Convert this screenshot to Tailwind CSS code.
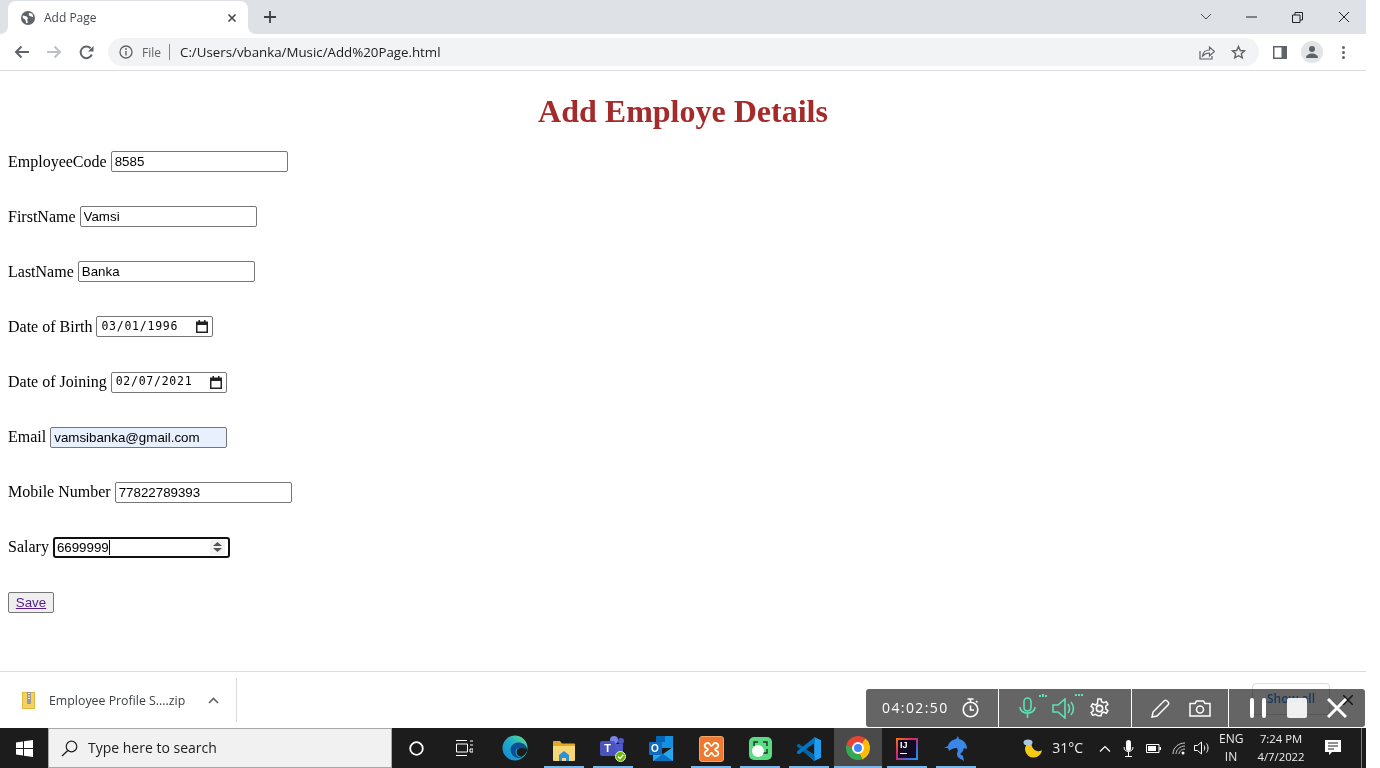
<!DOCTYPE html>
<html lang="en">
<head>
    <meta charset="UTF-8">
    <title>Add Page</title>
    <script src="https://cdn.jsdelivr.net/npm/@tailwindcss/browser@4"></script>
</head>
<body class="bg-white overflow-hidden font-['Liberation_Sans',sans-serif]">
<div class="relative w-[1380px] h-[768px] overflow-hidden bg-white">
  <div class="flex flex-col w-[1366px] h-[768px]">

    <!-- tab strip -->
    <div class="h-[34px] bg-[#dee1e6] flex items-end pl-2 shrink-0">
      <div class="relative w-[240px] h-[33px] bg-white rounded-t-lg flex items-center pl-[13px] pr-[11px] text-[#45494e]">
        <svg class="absolute left-[-8px] bottom-0" width="8" height="8" viewBox="0 0 8 8"><path d="M8 0v8H0c4 0 8-3 8-8z" fill="#fff"/></svg>
        <svg class="absolute right-[-8px] bottom-0" width="8" height="8" viewBox="0 0 8 8"><path d="M0 0v8h8C4 8 0 5 0 0z" fill="#fff"/></svg>
        <svg width="14" height="14" viewBox="0 0 16 16"><circle cx="8" cy="8" r="8" fill="#5f6368"/><path d="M2 5l4 1 2 2-1 2 1 3-2 1-1-4-3-2zM9 2l4 1 1 4-3-1-2-1z" fill="#fff"/></svg>
        <span class="ml-[9px] text-xs font-['Open_Sans',sans-serif]">Add Page</span>
        <svg class="ml-auto" width="10" height="10" viewBox="0 0 10 10"><path d="M1.500 1.500l7 7M8.500 1.500l-7 7" stroke="#44474b" stroke-width="1.600"/></svg>
      </div>
      <svg class="ml-[15px] mb-[10px]" width="14" height="14" viewBox="0 0 14 14"><path d="M7 1v12M1 7h12" stroke="#3c4043" stroke-width="1.800"/></svg>
      <div class="ml-auto flex items-center h-[34px] mr-[16px] text-[#3c4043]">
        <svg width="12" height="8" viewBox="0 0 12 8"><path d="M1 1l5 5 5-5" fill="none" stroke="#44474b"/></svg>
        <svg class="ml-[34px]" width="11" height="2" viewBox="0 0 11 2"><path d="M0 1h11" stroke="#222" stroke-width="1"/></svg>
        <svg class="ml-[35px]" width="11" height="11" viewBox="0 0 11 11"><path d="M.5 3h7.500v7.500H.5zM3 3V.5h7.500V8H8" fill="none" stroke="#222"/></svg>
        <svg class="ml-[35px]" width="12" height="12" viewBox="0 0 12 12"><path d="M1 1l10 10M11 1L1 11" stroke="#222"/></svg>
      </div>
    </div>

    <!-- toolbar -->
    <div class="h-[37px] bg-white border-b border-[#dadce0] flex items-center shrink-0 pl-[14px]">
      <svg width="16" height="14" viewBox="0 0 16 14"><path d="M15 7H2M7.500 1.500L2 7l5.500 5.500" fill="none" stroke="#5f6368" stroke-width="2"/></svg>
      <svg class="ml-[16px]" width="16" height="14" viewBox="0 0 16 14"><path d="M1 7h13M8.500 1.500L14 7l-5.500 5.500" fill="none" stroke="#bdc1c6" stroke-width="2"/></svg>
      <svg class="ml-[17px]" width="15" height="15" viewBox="0 0 15 15"><path d="M12.800 9.500A5.800 5.800 0 1 1 11.600 3.300" fill="none" stroke="#5f6368" stroke-width="2"/><path d="M14.500 1v5.500H9z" fill="#5f6368"/></svg>
      <div class="ml-[14px] w-[1151px] h-[28px] bg-[#f1f3f4] rounded-full flex items-center pl-[11px] pr-[12px]">
        <svg width="14" height="14" viewBox="0 0 14 14"><circle cx="7" cy="7" r="6" fill="none" stroke="#5f6368" stroke-width="1.300"/><path d="M7 6v4.500" stroke="#5f6368" stroke-width="1.400"/><circle cx="7" cy="4" r=".9" fill="#5f6368"/></svg>
        <span class="ml-[9px] mt-px text-[#5f6368] font-['Open_Sans',sans-serif] text-xs">File</span>
        <span class="ml-[8px] w-px h-[16px] bg-[#80868b]"></span>
        <span class="ml-[10px] mt-px text-[#202124] font-['Open_Sans',sans-serif] text-[13.3px]">C:/Users/vbanka/Music/Add%20Page.html</span>
        <svg class="ml-auto" width="16" height="15" viewBox="0 0 16 15"><path d="M1 6v8h12v-3" fill="none" stroke="#5f6368" stroke-width="1.200"/><path d="M3.500 11c.5-4 3-6 7-6V2l5 4.500-5 4.500V8c-3 0-5 .8-7 3z" fill="none" stroke="#5f6368" stroke-width="1.200"/></svg>
        <svg class="ml-[16px] mr-px" width="15" height="15" viewBox="0 0 15 15"><path d="M7.500 1.500l1.800 4 4.200.4-3.200 2.800 1 4.200-3.800-2.200-3.800 2.200 1-4.200L1.500 5.900l4.200-.4z" fill="none" stroke="#5f6368" stroke-width="1.400"/></svg>
      </div>
      <svg class="ml-[14px]" width="14" height="13" viewBox="0 0 14 13"><path d="M0 0h14v13H0z" fill="#5f6368"/><path d="M1.500 1.500h7v10h-7z" fill="#fff"/></svg>
      <div class="ml-[14px] w-[22px] h-[22px] rounded-full bg-[#e2e4e8] flex items-center justify-center">
        <svg width="12" height="12" viewBox="0 0 12 12"><circle cx="6" cy="3" r="3" fill="#5f6368"/><path d="M0 12c0-3 3-4.500 6-4.500s6 1.500 6 4.500z" fill="#5f6368"/></svg>
      </div>
      <div class="ml-[19px] flex flex-col gap-[2px]">
        <span class="w-[3px] h-[3px] rounded-full bg-[#5f6368]"></span>
        <span class="w-[3px] h-[3px] rounded-full bg-[#5f6368]"></span>
        <span class="w-[3px] h-[3px] rounded-full bg-[#5f6368]"></span>
      </div>
    </div>

    <!-- page -->
    <div class="flex-1 min-h-0 font-['Liberation_Serif',serif] text-base text-black">
      <h1 class="text-[32px] leading-[37px] font-bold text-[#a52a2a] text-center mt-[22px]">Add Employe Details</h1>
      <form class="mt-[21px] pl-2 flex flex-col gap-[34.15px]">
        <div class="flex items-center gap-1 h-[21px]">
          <label>EmployeeCode</label>
          <input type="text" value="8585" class="w-[177px] h-[21px] border border-[#767676] rounded-[2px] px-[3px] text-[13.33px] font-['Liberation_Sans',sans-serif]">
        </div>
        <div class="flex items-center gap-1 h-[21px]">
          <label>FirstName</label>
          <input type="text" value="Vamsi" class="w-[177px] h-[21px] border border-[#767676] rounded-[2px] px-[3px] text-[13.33px] font-['Liberation_Sans',sans-serif]">
        </div>
        <div class="flex items-center gap-1 h-[21px]">
          <label>LastName</label>
          <input type="text" value="Banka" class="w-[177px] h-[21px] border border-[#767676] rounded-[2px] px-[3px] text-[13.33px] font-['Liberation_Sans',sans-serif]">
        </div>
        <div class="flex items-center gap-1 h-[21px]">
          <label>Date of Birth</label>
          <div class="w-[117px] h-[21px] border border-[#767676] rounded-[2px] pl-[4px] pr-[4px] flex items-center justify-between text-[11.5px] font-['DejaVu_Sans_Mono',monospace]">
            <span class="tracking-[.75px]">03/01/1996</span>
            <svg width="12" height="13" viewBox="0 0 12 13"><path d="M0 1.500h12V13H0z" fill="#222"/><path d="M1.500 5h9v6.500h-9z" fill="#fff"/><path d="M2.500 0h1.500v2H2.500zM8 0h1.500v2H8z" fill="#222"/></svg>
          </div>
        </div>
        <div class="flex items-center gap-1 h-[21px]">
          <label>Date of Joining</label>
          <div class="w-[116px] h-[21px] border border-[#767676] rounded-[2px] pl-[4px] pr-[4px] flex items-center justify-between text-[11.5px] font-['DejaVu_Sans_Mono',monospace]">
            <span class="tracking-[.75px]">02/07/2021</span>
            <svg width="12" height="13" viewBox="0 0 12 13"><path d="M0 1.500h12V13H0z" fill="#222"/><path d="M1.500 5h9v6.500h-9z" fill="#fff"/><path d="M2.500 0h1.500v2H2.500zM8 0h1.500v2H8z" fill="#222"/></svg>
          </div>
        </div>
        <div class="flex items-center gap-1 h-[21px]">
          <label>Email</label>
          <input type="text" value="vamsibanka@gmail.com" class="w-[177px] h-[21px] bg-[#e8f0fe] border border-[#767676] rounded-[2px] px-[3px] text-[13.33px] font-['Liberation_Sans',sans-serif]">
        </div>
        <div class="flex items-center gap-1 h-[21px]">
          <label>Mobile Number</label>
          <input type="text" value="77822789393" class="w-[177px] h-[21px] border border-[#767676] rounded-[2px] px-[3px] text-[13.33px] font-['Liberation_Sans',sans-serif]">
        </div>
        <div class="flex items-center gap-1 h-[21px]">
          <label>Salary</label>
          <div class="w-[177px] h-[21px] border-2 border-[#101010] rounded-[3px] pl-[2px] pr-[3px] flex items-center text-[13.33px] font-['Liberation_Sans',sans-serif]">
            <span>6699999</span><span class="w-px h-[15px] bg-black"></span>
            <div class="ml-auto w-[15px] h-[15px] bg-[#f3f3f3] flex flex-col items-center justify-center gap-[2px]">
              <svg width="9" height="4" viewBox="0 0 9 4"><path d="M4.500 0L9 4H0z" fill="#555"/></svg>
              <svg width="9" height="4" viewBox="0 0 9 4"><path d="M4.500 4L9 0H0z" fill="#555"/></svg>
            </div>
          </div>
        </div>
        <div class="flex h-[21px]">
          <button type="button" class="w-[46px] h-[21px] bg-[#efefef] border border-[#767676] rounded-[2px] text-[13.33px] font-['Liberation_Sans',sans-serif] text-[#551a8b] underline">Save</button>
        </div>
      </form>
    </div>

    <!-- download bar -->
    <div class="h-[57px] shrink-0 border-t border-[#dadce0] bg-white flex items-center relative">
      <svg class="ml-[22px]" width="13" height="17" viewBox="0 0 13 17"><path d="M0 0h13v17H0z" fill="#f4d262"/><path d="M.5.500h12v16H.5z" fill="none" stroke="#e0b540"/><path d="M5 0h4v12H5z" fill="#9a9a9a"/><path d="M6 1h2v1H6zM6 3.500h2v1H6zM6 6h2v1H6z" fill="#eee"/></svg>
      <span class="ml-[14px] mt-[2px] text-[12.35px] text-[#3c4043] font-['Open_Sans',sans-serif]">Employee Profile S....zip</span>
      <svg class="ml-[23px]" width="11" height="7" viewBox="0 0 11 7"><path d="M1 6l4.500-4.500L10 6" fill="none" stroke="#5f6368" stroke-width="1.600"/></svg>
      <span class="ml-[17px] w-px h-[44px] bg-[#dadce0]"></span>
      <div class="ml-auto mr-[36px] mb-[3px] w-[78px] h-[32px] border border-[#dadce0] rounded flex items-center justify-center text-xs font-semibold text-[#3f8fe8] font-['Open_Sans',sans-serif]">Show all</div>
      <svg class="absolute right-[13px] top-[23px]" width="10" height="10" viewBox="0 0 10 10"><path d="M0 0l10 10M10 0L0 10" stroke="#333" stroke-width="1.500"/></svg>
    </div>

    <!-- taskbar -->
    <div class="h-[40px] shrink-0 bg-[#1c1c1c] flex items-center text-white relative">
      <div class="w-[48px] h-full flex items-center justify-center">
        <svg width="17" height="17" viewBox="0 0 17 17"><path d="M0 2.400L7 1.400v6.600H0zM8 1.200L17 0v8H8zM0 9h7v6.600L0 14.600zM8 9h9v8l-9-1.200z" fill="#fff"/></svg>
      </div>
      <div class="w-[344px] h-[40px] bg-[#f1f1f1] border border-[#a8a8a8] flex items-center pl-[12px] text-[#202020]">
        <svg width="17" height="17" viewBox="0 0 17 17"><circle cx="10.500" cy="6.500" r="5.300" fill="none" stroke="#222" stroke-width="1.200"/><path d="M6.800 10.500L1 16" stroke="#222" stroke-width="1.400"/></svg>
        <span class="ml-[10px] text-sm font-['Open_Sans',sans-serif]">Type here to search</span>
      </div>
      <!-- cortana -->
      <div class="w-[48px] h-full flex items-center justify-center">
        <svg width="15" height="15" viewBox="0 0 15 15"><circle cx="7.500" cy="7.500" r="6.300" fill="none" stroke="#fff" stroke-width="1.800"/></svg>
      </div>
      <!-- task view -->
      <div class="w-[48px] h-full flex items-center justify-center">
        <svg width="17" height="16" viewBox="0 0 17 16"><path d="M0 .5h11M0 15.500h11M.5 4h11v8H.5zM14 1h3M14 5h3M14 9h3v3h-3z" fill="none" stroke="#fff"/></svg>
      </div>
      <!-- edge -->
      <div class="ml-[3px] w-[48px] h-full flex items-center justify-center">
        <svg width="26" height="26" viewBox="0 0 26 26">
          <defs><linearGradient id="edgeGrad" x1="0" y1="1" x2="1" y2="0"><stop offset="0" stop-color="#1683d8"/><stop offset=".55" stop-color="#1fb1c9"/><stop offset="1" stop-color="#6fe07f"/></linearGradient></defs>
          <circle cx="13" cy="13" r="12.500" fill="url(#edgeGrad)"/>
          <path d="M25.500 14c-1.500-5-6-7-10-6.500C10 8.300 7.500 13 9 17.500c1.500 4.500 7 7 12 5-3.500.3-7-1.500-7.500-5-.4-3 2-4.500 5-4.200 2.500.2 5 .3 7 .7z" fill="#0b4f96"/>
          <path d="M25.500 13.800c-2-.6-4-.8-6-.8-3-.2-5 1.500-5 4 0 2.500 2 4.500 5 5 3-1.500 5.500-4.500 6-8.200z" fill="#1c1c1c"/>
        </svg>
      </div>
      <!-- explorer -->
      <div class="w-[48px] h-full flex items-end justify-center pl-[1px]">
        <div class="w-[40px] h-full flex flex-col items-center justify-end border-b-[2px] border-[#76b9ed]">
          <svg class="mb-[5px]" width="22" height="20" viewBox="0 0 22 20"><path d="M0 1a1 1 0 0 1 1-1h6l2 2.500h12a1 1 0 0 1 1 1V6H0z" fill="#e2a928"/><path d="M0 5h22v14a1 1 0 0 1-1 1H1a1 1 0 0 1-1-1z" fill="#f8d775"/><path d="M6 14l5-4 5 4v6H13v-3H9v3H6z" fill="#2f8fd8"/></svg>
        </div>
      </div>
      <!-- teams -->
      <div class="ml-[2px] w-[48px] h-full flex items-end justify-center">
        <div class="w-[40px] h-full flex flex-col items-center justify-end border-b-[2px] border-[#76b9ed]">
          <div class="relative w-[26px] h-[26px] mb-[4px]">
            <span class="absolute left-[10px] top-0 w-[8px] h-[8px] rounded-full bg-[#7b83eb]"></span>
            <span class="absolute right-[2px] top-[2px] w-[6px] h-[6px] rounded-full bg-[#5059c9]"></span>
            <span class="absolute left-[9px] top-[8px] w-[14px] h-[12px] rounded-b-[4px] bg-[#5059c9]"></span>
            <span class="absolute left-0 top-[5px] w-[15px] h-[15px] bg-[#4b53bc] rounded-[2px] text-[11px] leading-[15px] text-center font-bold">T</span>
            <svg class="absolute right-0 bottom-0" width="11" height="11" viewBox="0 0 11 11"><circle cx="5.500" cy="5.500" r="5" fill="#6bb700" stroke="#e8e8e8"/><path d="M3 5.500l2 2 3.300-3.800" fill="none" stroke="#fff" stroke-width="1.300"/></svg>
          </div>
        </div>
      </div>
      <!-- outlook -->
      <div class="w-[48px] h-full flex items-center justify-center pr-[1px]">
        <div class="relative w-[24px] h-[25px]">
          <span class="absolute right-0 top-0 w-[17px] h-[12px] bg-[#1490df]"></span>
          <span class="absolute left-[7px] top-0 w-[9px] h-[6px] bg-[#0364b8]"></span>
          <svg class="absolute right-0 bottom-0" width="20" height="14" viewBox="0 0 20 14"><path d="M0 0l10 7 10-7v14H0z" fill="#28a8ea"/><path d="M0 14l10-7 10 7z" fill="#0a6fc2"/></svg>
          <span class="absolute left-0 top-[6px] w-[13px] h-[13px] bg-[#0f6cbd] rounded-[1px] text-[10px] leading-[13px] text-center font-bold">O</span>
        </div>
      </div>
      <!-- xampp -->
      <div class="ml-[2px] w-[48px] h-full flex items-end justify-center">
        <div class="w-[40px] h-full flex flex-col items-center justify-end border-b-[2px] border-[#76b9ed]">
          <div class="mb-[4px] w-[25px] h-[26px] rounded-[3px] bg-[#ed7a2f] border border-[#f7a468] flex items-center justify-center">
            <svg width="17" height="17" viewBox="0 0 17 17"><path d="M5 2C7 2 7 5 8.500 5 10 5 10 2 12 2c3 0 4 2 3 4-.5 1-3 1.500-3 2.500s2.500 1.500 3 2.500c1 2 0 4-3 4-2 0-2-3-3.500-3S7 15 5 15c-3 0-4-2-3-4 .5-1 3-1.500 3-2.500S2.500 7 2 6C1 4 2 2 5 2z" fill="none" stroke="#fff" stroke-width="1.800"/></svg>
          </div>
        </div>
      </div>
      <!-- green recorder app -->
      <div class="ml-px w-[48px] h-full flex items-end justify-center">
        <div class="w-[40px] h-full flex flex-col items-center justify-end border-b-[2px] border-[#76b9ed]">
          <div class="relative mb-[6px] w-[23px] h-[23px] rounded-[5px] bg-[#5adc83]">
            <svg class="absolute left-[4px] top-[4px]" width="15" height="13" viewBox="0 0 15 13"><path d="M1 5V1h4M10 1h4v4M14 8v4h-4" fill="none" stroke="#2c2c2c" stroke-width="1.400"/></svg>
            <span class="absolute left-[3px] bottom-[3px] w-[12px] h-[12px] rounded-full bg-white"></span>
          </div>
        </div>
      </div>
      <!-- vs code -->
      <div class="ml-px w-[48px] h-full flex items-end justify-center">
        <div class="w-[40px] h-full flex flex-col items-center justify-end border-b-[2px] border-[#76b9ed]">
          <svg class="mb-[5px]" width="24" height="24" viewBox="0 0 23 23"><path d="M16.500 0L23 3v17l-6.500 3L5 12.500l11.500-7z" fill="#1f9cf0"/><path d="M16.500 6v11l-9-5.500z" fill="#1c1c1c"/><path d="M0 7.500L2 6.500 17 18v5L0 9z" fill="#0065a9"/><path d="M0 15.500L2 16.500 17 5V0L0 14z" fill="#0078c8"/></svg>
        </div>
      </div>
      <!-- chrome -->
      <div class="ml-px w-[48px] h-full bg-[#4a4a4a] flex flex-col items-center justify-end">
        <div class="mb-[6px] w-[24px] h-[24px] rounded-full bg-[conic-gradient(from_-80deg,#ea4335_0_33.3%,#fbbc05_33.3%_66.6%,#34a853_66.6%)] flex items-center justify-center"><span class="w-[12px] h-[12px] rounded-full bg-[#4285f4] border-2 border-white"></span></div>
        <div class="w-full h-[2px] bg-[#76b9ed]"></div>
      </div>
      <!-- intellij -->
      <div class="ml-px w-[48px] h-full flex items-end justify-center">
        <div class="w-[40px] h-full flex flex-col items-center justify-end border-b-[2px] border-[#76b9ed]">
          <div class="mb-[6px] w-[22px] h-[22px] p-[2px] bg-[linear-gradient(135deg,#f97a12,#d6246e_40%,#3f6fe0_75%,#1d9fe0)]"><div class="w-full h-full bg-[#120a20] text-[9px] leading-[11px] font-bold pl-[2px]">IJ<div class="w-[7px] h-px bg-white mt-[2px]"></div></div></div>
        </div>
      </div>
      <!-- dolphin -->
      <div class="ml-px w-[48px] h-full flex items-end justify-center">
        <div class="w-[40px] h-full flex flex-col items-center justify-end border-b-[2px] border-[#76b9ed]">
          <svg class="mb-[5px]" width="24" height="25" viewBox="0 0 24 25"><path d="M0 12l4-2c1-4 4-6 8-7l2-3 1 3c5 1 8 5 8 10l-3-1c-1 3-2 5-4 6l3 2 1 5-5-3c-2-1-2-3-2-5 1-1 1-3 0-5-3 0-6 1-8 3l-1-3z" fill="#3a87e8"/></svg>
        </div>
      </div>

      <!-- tray -->
      <div class="absolute right-[4px] top-0 h-[40px] flex items-center text-[#ececec]">
        <svg width="20" height="20" viewBox="0 0 20 20"><path d="M8 3a8.500 8.500 0 1 0 11 9c-1 1-3 1.500-5 1-4-.6-6-5.500-6-10z" fill="#f6c915"/><ellipse cx="5" cy="4.500" rx="4.500" ry="3" fill="#a9c6dc"/></svg>
        <span class="ml-[9px] text-sm font-['Open_Sans',sans-serif]">31°C</span>
        <svg class="ml-[16px]" width="12" height="7" viewBox="0 0 12 7"><path d="M1 6.500l5-5 5 5" fill="none" stroke="#fff" stroke-width="1.200"/></svg>
        <svg class="ml-[12px]" width="11" height="17" viewBox="0 0 11 17"><rect x="3" y="0" width="5" height="11" rx="2.500" fill="#fff"/><path d="M1 7c0 6 9 6 9 0M5.500 12v4M2 16.500h7" fill="none" stroke="#fff"/></svg>
        <svg class="ml-[12px]" width="15" height="9" viewBox="0 0 15 9"><path d="M.5.500h12.500v8H.5z" fill="none" stroke="#fff"/><path d="M2 2h8v5H2zM13.500 3H15v3h-1.500z" fill="#fff"/></svg>
        <svg class="ml-[11px]" width="14" height="13" viewBox="0 0 14 13"><path d="M1 12C1 6 6 1 13 1M4 12c0-4 4-8 9-8M7 12c0-2.500 2.500-5 6-5" fill="none" stroke="#ccc"/><circle cx="11" cy="11" r="1.500" fill="#fff"/></svg>
        <svg class="ml-[8px]" width="16" height="14" viewBox="0 0 16 14"><path d="M.5 4.500h3l4-3.500v12l-4-3.500h-3zM10 4.500c1 1.500 1 3.500 0 5M12.500 2.500c2 2.500 2 6.500 0 9" fill="none" stroke="#fff"/></svg>
        <div class="ml-[9px] w-[24px] text-center text-xs leading-[18px] font-['Open_Sans',sans-serif]"><div>ENG</div><div>IN</div></div>
        <div class="ml-[13px] w-[50px] text-center text-[11.3px] leading-[18px] font-['Open_Sans',sans-serif]"><div>7:24 PM</div><div>4/7/2022</div></div>
        <svg class="ml-[19px] mr-[21px]" width="16" height="16" viewBox="0 0 16 16"><path d="M0 0h16v12H7l-3 3v-3H0z" fill="#fff"/><path d="M3 3h10M3 6h10M3 9h6" stroke="#222"/></svg>
      </div>
      <span class="absolute right-[4px] top-0 w-px h-full bg-[#7a7a7a]"></span>
    </div>
  </div>

  <!-- recorder overlay: multiplies over the download bar, icons stay on top -->
  <div class="absolute left-[866px] top-[689px] w-[499px] h-[38px]">
    <div class="absolute inset-0 bg-[#656565] rounded-[3px] mix-blend-multiply"></div>
    <div class="relative h-full flex items-center text-white">
      <div class="w-[133px] h-full border-r border-white flex items-center pl-[16px]">
        <span class="text-sm tracking-[1.4px] font-['Open_Sans',sans-serif]">04:02:50</span>
        <svg class="ml-[13px]" width="17" height="20" viewBox="0 0 17 20"><circle cx="8.500" cy="11.500" r="7.300" fill="none" stroke="#fff" stroke-width="1.600"/><path d="M5.500 1h6M8.500 1v3M8.500 7.500v4.500h3.500M14 3l1.500 1.500" fill="none" stroke="#fff" stroke-width="1.600"/></svg>
      </div>
      <div class="relative w-[133px] h-full border-r border-white flex items-center pl-[20px]">
        <svg width="17" height="22" viewBox="0 0 17 22"><rect x="5" y="1" width="7" height="13" rx="3.500" fill="none" stroke="#5fe0b5" stroke-width="1.600"/><path d="M1 10c0 8 15 8 15 0M8.500 16v5" fill="none" stroke="#5fe0b5" stroke-width="1.600"/></svg>
        <span class="absolute left-[40px] top-[5px] flex gap-[1px] items-end"><i class="w-[2px] h-[2px] bg-[#5fe0b5]"></i><i class="w-[2px] h-[3px] bg-[#5fe0b5]"></i><i class="w-[2px] h-[2px] bg-[#5fe0b5]"></i></span>
        <svg class="ml-[16px]" width="23" height="21" viewBox="0 0 23 21"><path d="M1 7h5l7-6v19l-7-6H1zM16 6c2 3 2 6 0 9M19 4c3 4 3 9 0 13" fill="none" stroke="#5fe0b5" stroke-width="1.600"/></svg>
        <span class="absolute left-[76px] top-[5px] flex gap-[1px]"><i class="w-[2px] h-[2px] bg-[#5fe0b5]"></i><i class="w-[2px] h-[2px] bg-[#5fe0b5]"></i><i class="w-[2px] h-[2px] bg-[#5fe0b5]"></i></span>
        <svg class="ml-[14px]" width="21" height="21" viewBox="0 0 20 20"><circle cx="10" cy="10" r="3" fill="none" stroke="#fff" stroke-width="1.500"/><path d="M8.500 1h3l.5 2.500 2 1 2.500-1 1.500 2.500-2 1.700v2.600l2 1.700-1.500 2.500-2.500-1-2 1-.5 2.500h-3L8 16.500l-2-1-2.500 1L2 14l2-1.700V9.700L2 8l1.500-2.500 2.500 1 2-1z" fill="none" stroke="#fff" stroke-width="1.400"/></svg>
      </div>
      <div class="w-[97px] h-full border-r border-white flex items-center pl-[19px]">
        <svg width="19" height="19" viewBox="0 0 19 19"><path d="M1 18l1-5L13 2c1-1 2-1 3 0l1 1c1 1 1 2 0 3L6 17z" fill="none" stroke="#fff" stroke-width="1.500"/></svg>
        <svg class="ml-[19px]" width="22" height="17" viewBox="0 0 22 17"><path d="M1 3.500h5L7.500 1h7L16 3.500h5V16H1z" fill="none" stroke="#fff" stroke-width="1.500"/><circle cx="11" cy="9.500" r="3.500" fill="none" stroke="#fff" stroke-width="1.500"/></svg>
      </div>
      <div class="flex-1 h-full flex items-center pl-[21px]">
        <span class="w-[4px] h-[20px] rounded-full bg-white"></span>
        <span class="ml-[8px] w-[4px] h-[20px] rounded-full bg-white"></span>
        <span class="ml-[21px] w-[20px] h-[20px] rounded-[2px] bg-white/90"></span>
        <svg class="ml-[20px]" width="20" height="20" viewBox="0 0 20 20"><path d="M1 1l18 18M19 1L1 19" stroke="#fff" stroke-width="3"/></svg>
      </div>
    </div>
  </div>
</div>
</body>
</html>
